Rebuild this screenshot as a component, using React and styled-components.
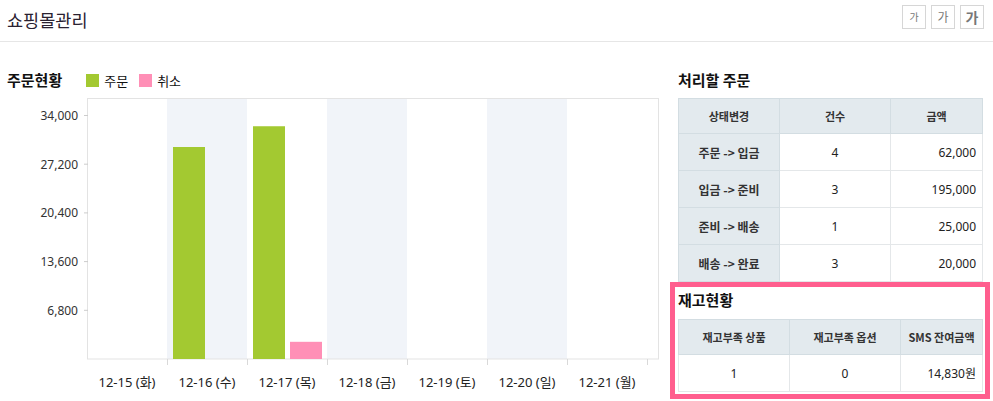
import React from 'react';
import styled, { createGlobalStyle } from 'styled-components';

const GlobalStyle = createGlobalStyle`
  body {
    margin: 0;
    background: #fff;
    font-family: "Noto Sans", "Noto Sans CJK KR", sans-serif;
    color: #333;
  }
`

const Header = styled.div`
  display: flex;
  justify-content: space-between;
  align-items: flex-start;
  height: 42px;
  padding: 5px 9px 0 7px;
  box-sizing: border-box;
  border-bottom: 1px solid #e6e6e6;
`

const PageTitle = styled.h1`
  margin: 0;
  font-size: 17.5px;
  font-weight: 400;
  line-height: 30px;
  color: #2a2130;
  font-family: "Noto Sans CJK KR", sans-serif;
`

const SizeButtons = styled.div`
  display: flex;
  gap: 5px;
`

const SizeButton = styled.button`
  width: 24px;
  height: 24px;
  padding: 0;
  border: 1px solid #d6d6d6;
  background: #fff;
  color: #777;
  font-family: "Noto Sans CJK KR", sans-serif;
  font-size: ${p => p.size}px;
  font-weight: ${p => (p.bold ? 700 : 400)};
  line-height: 22px;
`

const Main = styled.div`
  display: flex;
  gap: 18px;
  padding: 28px 0 0 7px;
`

const LeftCol = styled.div`
  width: 653px;
  display: flex;
  flex-direction: column;
`

const RightCol = styled.div`
  width: 305px;
  display: flex;
  flex-direction: column;
`

const TitleRow = styled.div`
  display: flex;
  align-items: center;
  height: 20px;
`

const SectionTitle = styled.h2`
  margin: 0;
  font-size: 15px;
  font-weight: 700;
  line-height: 20px;
  color: #111;
  font-family: "Noto Sans CJK KR", sans-serif;
  margin-right: ${p => p.gap || 0}px;
`

const Legend = styled.div`
  display: flex;
  align-items: center;
  margin-right: 11px;
  font-size: 13px;
  font-family: "Noto Sans CJK KR", sans-serif;
  color: #111;
`

const Swatch = styled.span`
  width: 13px;
  height: 13px;
  margin-right: 5px;
  background: ${p => p.color};
`

const ChartSvg = styled.svg`
  display: block;
  margin-top: 4px;
`

const Table = styled.table`
  width: 100%;
  margin-top: ${p => p.top}px;
  border-collapse: collapse;
  table-layout: fixed;
  font-family: "Noto Sans", "Noto Sans CJK KR", sans-serif;
  font-size: 12px;
  color: #222;
`

const Th = styled.th`
  height: 34px;
  padding: 0;
  background: #e3eaee;
  border: 1px solid #d3dde2;
  font-size: 11px;
  font-weight: 700;
  color: #333;
  font-family: "Noto Sans CJK KR", sans-serif;
`

const RowHead = styled.th`
  height: 36px;
  padding: 0;
  background: #e3eaee;
  border: 1px solid #d3dde2;
  font-size: 12px;
  font-weight: 700;
  color: #333;
  font-family: "Noto Sans CJK KR", sans-serif;
`

const Td = styled.td`
  height: 36px;
  padding: 0 6px;
  border: 1px solid #e4e7e9;
  text-align: ${p => p.align || 'center'};
`

const Highlight = styled.div`
  margin: 0 -7px 0 -8px;
  padding: 3px 2px 2px 3px;
  border: 5px solid #ff5e8e;
  background: #fff;
`

const orders = [
  { step: '주문 -> 입금', count: 4, amount: '62,000' },
  { step: '입금 -> 준비', count: 3, amount: '195,000' },
  { step: '준비 -> 배송', count: 1, amount: '25,000' },
  { step: '배송 -> 완료', count: 3, amount: '20,000' },
]

const days = ['12-15 (화)', '12-16 (수)', '12-17 (목)', '12-18 (금)', '12-19 (토)', '12-20 (일)', '12-21 (월)']
const data = [
  { order: 0, cancel: 0 },
  { order: 29600, cancel: 0 },
  { order: 32500, cancel: 2400 },
  { order: 0, cancel: 0 },
  { order: 0, cancel: 0 },
  { order: 0, cancel: 0 },
  { order: 0, cancel: 0 },
]
const yTicks = [34000, 27200, 20400, 13600, 6800]

const GREEN = '#a3c931'
const PINK = '#ff8fb6'
const X0 = 87
const COL = 80
const BASE = 360
const SCALE = 243.5 / 34000

function Chart() {
  return (
    <ChartSvg width="653" height="305" viewBox="7 95 653 305">
      {days.map((d, i) =>
        i % 2 === 1 ? <rect key={'b' + i} x={X0 + i * COL} y="100" width={COL} height="260" fill="#f1f4f9" /> : null
      )}
      <rect x="87.5" y="99.5" width="571" height="260.5" fill="none" stroke="#e3e3e3" />
      {yTicks.map(v => {
        const y = BASE - v * SCALE
        return (
          <g key={v}>
            <line x1="84" x2="88" y1={y} y2={y} stroke="#ccc" />
            <text x="78" y={y + 4.5} textAnchor="end" fontSize="12" fill="#333" fontFamily="Noto Sans">
              {v.toLocaleString('en-US')}
            </text>
          </g>
        )
      })}
      {days.map((d, i) => {
        const x = X0 + i * COL
        const r = data[i]
        return (
          <g key={d}>
            <line x1={x + COL + 0.5} x2={x + COL + 0.5} y1="360" y2="366" stroke="#d9d9d9" />
            {r.order > 0 && (
              <rect x={x + 6} y={BASE - r.order * SCALE} width="32" height={r.order * SCALE} fill={GREEN} />
            )}
            {r.cancel > 0 && (
              <rect x={x + 43} y={BASE - r.cancel * SCALE} width="32" height={r.cancel * SCALE} fill={PINK} />
            )}
            <text x={x + 40} y="388" textAnchor="middle" fontSize="13" fill="#222" fontFamily="Noto Sans, Noto Sans CJK KR">
              {d}
            </text>
          </g>
        )
      })}
    </ChartSvg>
  )
}

export default function App() {
  return (
    <>
      <GlobalStyle />
      <Header>
        <PageTitle>쇼핑몰관리</PageTitle>
        <SizeButtons>
          <SizeButton size={10}>가</SizeButton>
          <SizeButton size={12}>가</SizeButton>
          <SizeButton size={14} bold>가</SizeButton>
        </SizeButtons>
      </Header>
      <Main>
        <LeftCol>
          <TitleRow>
            <SectionTitle gap={24}>주문현황</SectionTitle>
            <Legend><Swatch color={GREEN} />주문</Legend>
            <Legend><Swatch color={PINK} />취소</Legend>
          </TitleRow>
          <Chart />
        </LeftCol>
        <RightCol>
          <TitleRow>
            <SectionTitle>처리할 주문</SectionTitle>
          </TitleRow>
          <Table top={8}>
            <colgroup>
              <col style={{ width: 101 }} />
              <col style={{ width: 111 }} />
              <col />
            </colgroup>
            <thead>
              <tr>
                <Th>상태변경</Th>
                <Th>건수</Th>
                <Th>금액</Th>
              </tr>
            </thead>
            <tbody>
              {orders.map(o => (
                <tr key={o.step}>
                  <RowHead>{o.step}</RowHead>
                  <Td>{o.count}</Td>
                  <Td align="right">{o.amount}</Td>
                </tr>
              ))}
            </tbody>
          </Table>
          <Highlight>
            <TitleRow>
              <SectionTitle>재고현황</SectionTitle>
            </TitleRow>
            <Table top={9}>
              <colgroup>
                <col style={{ width: 111 }} />
                <col style={{ width: 111 }} />
                <col />
              </colgroup>
              <thead>
                <tr>
                  <Th>재고부족 상품</Th>
                  <Th>재고부족 옵션</Th>
                  <Th>SMS 잔여금액</Th>
                </tr>
              </thead>
              <tbody>
                <tr>
                  <Td>1</Td>
                  <Td>0</Td>
                  <Td align="right">14,830원</Td>
                </tr>
              </tbody>
            </Table>
          </Highlight>
        </RightCol>
      </Main>
    </>
  )
}
